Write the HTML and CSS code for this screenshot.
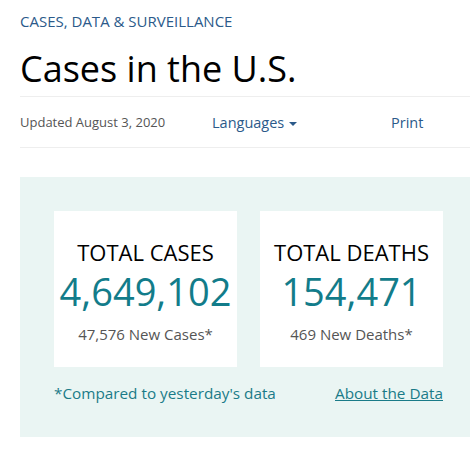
FILE: index.html
```html
<!DOCTYPE html>
<html lang="en">
<head>
  <meta charset="UTF-8" />
  <title>Cases in the U.S.</title>
  <link rel="stylesheet" href="styles.css">
</head>
<body>
  <div class="page">
    <a class="crumb" href="#">CASES, DATA &amp; SURVEILLANCE</a>
    <h1 class="title">Cases in the U.S.</h1>

    <div class="toolbar">
      <span class="updated">Updated August 3, 2020</span>
      <a class="lang" href="#">Languages <span class="caret"></span></a>
      <a class="print" href="#">Print</a>
    </div>

    <section class="panel">
      <div class="panel-inner">
        <div class="cards">
          <div class="card">
            <div class="card-label">TOTAL CASES</div>
            <div class="card-num">4,649,102</div>
            <div class="card-new">47,576 New Cases*</div>
          </div>
          <div class="card">
            <div class="card-label">TOTAL DEATHS</div>
            <div class="card-num">154,471</div>
            <div class="card-new">469 New Deaths*</div>
          </div>
        </div>
        <div class="panel-foot">
          <span class="note">*Compared to yesterday's data</span>
          <a class="about" href="#">About the Data</a>
        </div>
      </div>
    </section>
  </div>
</body>
</html>
```

FILE: styles.css
```css
body {
  font-family: "Open Sans", Arial, sans-serif;
  margin: 0;
  padding: 0;
  background: #fff;
  color: #000;
  overflow: hidden;
}

a {
  text-decoration: none;
}

.page {
  padding: 11px 0 0 20px;
}

.crumb {
  display: block;
  color: #2b5a8a;
  font-size: 15px;
  line-height: 20px;
}

.title {
  font-weight: 400;
  font-size: 36px;
  line-height: 48px;
  margin: 14px 0 3px;
}

.toolbar {
  display: grid;
  grid-template-columns: 192px 179px auto;
  align-items: center;
  height: 50px;
  border-top: 1px solid #eeeeee;
  border-bottom: 1px solid #eeeeee;
  font-size: 14px;
}

.updated {
  color: #555;
  font-size: 13px;
}

.lang, .print {
  color: #2b5a8a;
  font-size: 14.5px;
}

.caret {
  display: inline-block;
  width: 0;
  height: 0;
  border-left: 4px solid transparent;
  border-right: 4px solid transparent;
  border-top: 4px solid #2b5a8a;
  vertical-align: middle;
  margin-left: 1px;
}

.panel {
  margin-top: 29px;
  background: #eaf5f3;
  padding: 34px 0 0 34px;
  height: 226px;
}

.panel-inner {
  width: 389px;
}

.cards {
  display: flex;
  gap: 23px;
}

.card {
  width: 183px;
  height: 156px;
  background: #fff;
  text-align: center;
  padding-top: 25px;
  box-sizing: border-box;
}

.card-label {
  font-size: 22px;
  line-height: 32px;
  color: #000;
}

.card-num {
  font-size: 38px;
  line-height: 46px;
  color: #127c8a;
}

.card-new {
  margin-top: 8px;
  font-size: 15px;
  line-height: 24px;
  color: #555;
}

.panel-foot {
  display: flex;
  justify-content: space-between;
  margin-top: 14px;
  font-size: 15.3px;
  line-height: 24px;
}

.note {
  color: #1a7b88;
}

.about {
  color: #1a7b88;
  text-decoration: underline;
}
```
